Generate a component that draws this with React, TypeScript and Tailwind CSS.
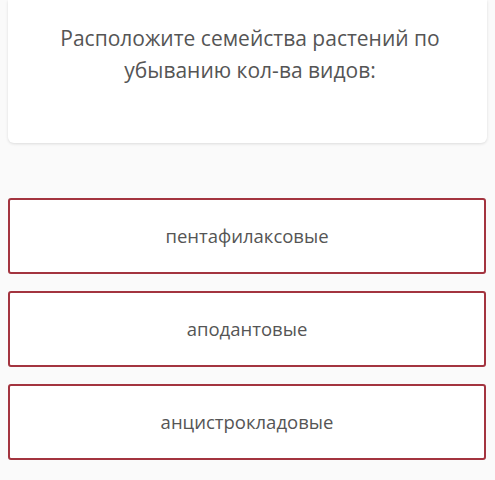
import React from 'react';

const options = ['пентафилаксовые', 'аподантовые', 'анцистрокладовые'];

export default function App() {
  return (
    <div
      className="min-h-[480px] w-[495px] bg-[#fafafa] px-2 text-[#555555]"
      style={{ fontFamily: '"Open Sans", "Noto Sans", sans-serif' }}
    >
      <div className="flex h-[143px] flex-col items-center rounded-b-md bg-white pt-[22px] pl-[5px] shadow-[0_1px_3px_rgba(0,0,0,0.12)]">
        <h1 className="text-center text-[21px] leading-[32px] font-normal">
          Расположите семейства растений по
          <br />
          убыванию кол-ва видов:
        </h1>
      </div>

      <div className="mt-[55px] flex flex-col gap-[17px] pr-[1px]">
        {options.map((o) => (
          <div
            key={o}
            className="flex h-[76px] items-center justify-center rounded-[3px] border-2 border-[#a3343f] bg-white text-[18.5px]"
          >
            {o}
          </div>
        ))}
      </div>
    </div>
  );
}
